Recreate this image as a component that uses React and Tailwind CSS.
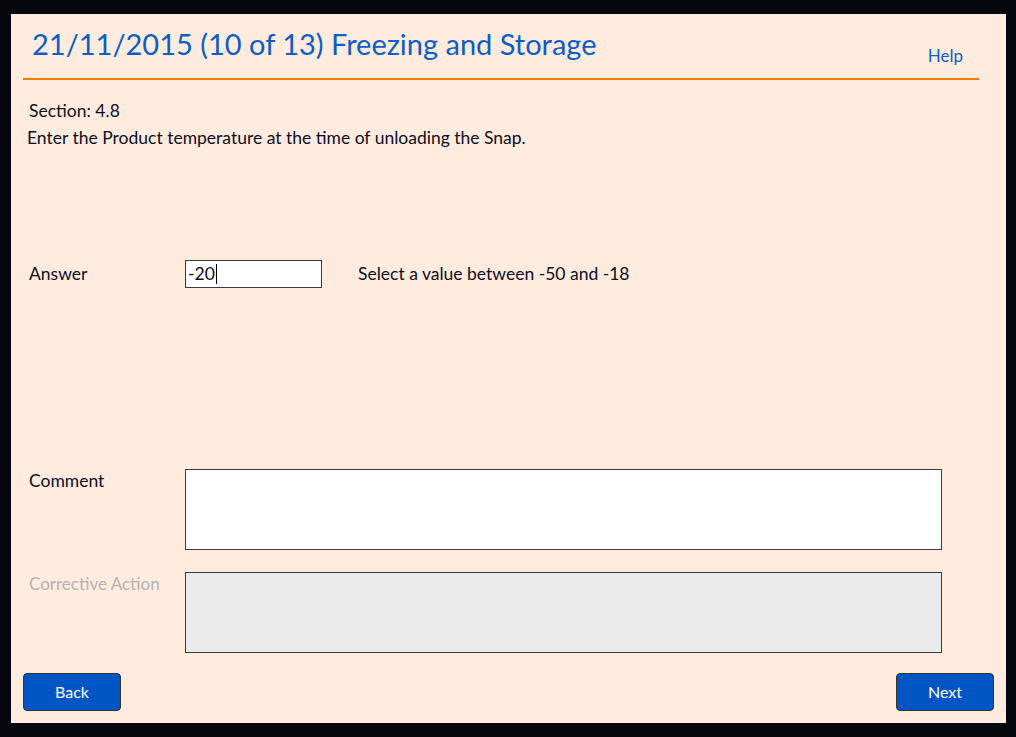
export default function App() {
  return (
    <div className="w-[1016px] h-[737px] bg-[#07080d] pt-[14px] pl-[11px] pr-[10px] pb-[14px] font-['Lato',sans-serif] text-[#0d0d1f]">
      <div className="h-full bg-[#ffecde] flex flex-col px-[12px] pb-[12px]">
        {/* header */}
        <div className="mr-[15px] h-[66px] border-b-2 border-[#f07f00] flex justify-between items-end">
          <h1 className="self-start mt-[13px] ml-[9px] text-[29px] leading-[34px] text-[#0c5cc9]">
            21/11/2015 (10 of 13) Freezing and Storage
          </h1>
          <a className="mb-[12px] mr-[16px] text-[17px] leading-[20px] text-[#0c5cc9]">Help</a>
        </div>

        <p className="mt-[21px] pl-[6px] text-[17.5px] leading-[20px]">Section: 4.8</p>
        <p className="mt-[7px] pl-[4px] text-[17.5px] leading-[20px]">
          Enter the Product temperature at the time of unloading the Snap.
        </p>

        {/* answer */}
        <div className="mt-[112px] flex items-center pl-[6px] text-[17.5px] leading-[20px]">
          <span className="w-[156px]">Answer</span>
          <div className="w-[137px] h-[28px] bg-white border border-[#3a3a3a] flex items-center pl-[2px]">
            -20
            <span className="w-px h-[20px] bg-black ml-px" />
          </div>
          <span className="ml-[36px]">Select a value between -50 and -18</span>
        </div>

        {/* comment */}
        <div className="mt-[181px] flex pl-[6px] text-[17.5px] leading-[20px]">
          <span className="w-[156px] pt-[2px]">Comment</span>
          <div className="w-[757px] h-[81px] bg-white border border-[#3a3a3a]" />
        </div>

        <div className="mt-[22px] flex pl-[6px] text-[17px] leading-[20px]">
          <span className="w-[156px] pt-[2px] text-[#b3b3b3]">Corrective Action</span>
          <div className="w-[757px] h-[81px] bg-[#ebebeb] border border-[#3a3a3a]" />
        </div>

        {/* buttons */}
        <div className="mt-auto flex justify-between">
          <button className="w-[98px] h-[38px] rounded-[4px] bg-[#0055c4] border border-[#333] text-white text-[16px]">
            Back
          </button>
          <button className="w-[98px] h-[38px] rounded-[4px] bg-[#0055c4] border border-[#333] text-white text-[16px]">
            Next
          </button>
        </div>
      </div>
    </div>
  );
}
